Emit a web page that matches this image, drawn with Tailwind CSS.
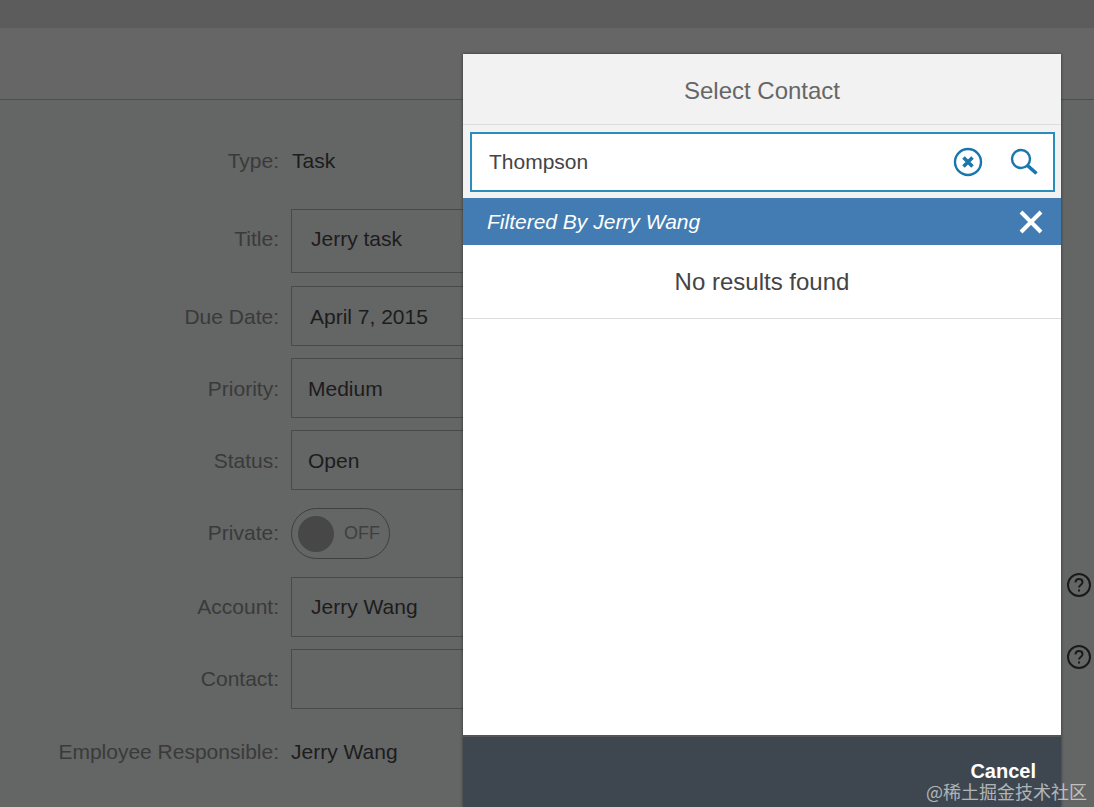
<!DOCTYPE html>
<html lang="en">
  <head>
    <meta charset="UTF-8" />
    <title>Select Contact</title>
    <script src="https://cdn.jsdelivr.net/npm/@tailwindcss/browser@4"></script>
  </head>
  <body class="relative w-[1094px] h-[807px] overflow-hidden bg-[#646565] font-['Liberation_Sans',Arial,sans-serif] text-[21px] text-[#1c1c1c]">
    <!-- Page behind the dialog -->
    <div class="h-[28px] bg-[#5c5c5c]"></div>
    <div class="h-[72px] bg-[#666666] border-b border-[#4e4e4e]"></div>

    <div class="flex flex-col">
      <div class="flex items-center h-10 mt-[41px]">
        <span class="w-[279px] text-right text-[#3a3a3a]">Type:</span>
        <span class="ml-3 pl-[1px]">Task</span>
      </div>
      <div class="flex items-center h-[64px] mt-[28px]">
        <span class="w-[279px] text-right text-[#3a3a3a] pb-[4px]">Title:</span>
        <div class="ml-3 w-[700px] h-full flex items-center pl-[19px] pb-[4px] border border-[#4a4a4a]">Jerry task</div>
      </div>
      <div class="flex items-center h-[60px] mt-[13px]">
        <span class="w-[279px] text-right text-[#3a3a3a] pt-[1px]">Due Date:</span>
        <div class="ml-3 w-[700px] h-full flex items-center pl-[18px] pt-[1px] border border-[#4a4a4a]">April 7, 2015</div>
      </div>
      <div class="flex items-center h-[60px] mt-[12px]">
        <span class="w-[279px] text-right text-[#3a3a3a] pt-[1px]">Priority:</span>
        <div class="ml-3 w-[700px] h-full flex items-center pl-[16px] pt-[1px] border border-[#4a4a4a]">Medium</div>
      </div>
      <div class="flex items-center h-[60px] mt-[12px]">
        <span class="w-[279px] text-right text-[#3a3a3a] pt-[1px]">Status:</span>
        <div class="ml-3 w-[700px] h-full flex items-center pl-[16px] pt-[1px] border border-[#4a4a4a]">Open</div>
      </div>
      <div class="flex items-center h-[51px] mt-[18px]">
        <span class="w-[279px] text-right text-[#3a3a3a] pb-[2px]">Private:</span>
        <div class="ml-3 w-[99px] h-full flex items-center pl-[6px] gap-[10px] rounded-full border border-[#3f3f3f] text-[18px] text-[#3f3f3f]">
          <span class="w-[36px] h-[36px] rounded-full bg-[#474747]"></span>
          <span>OFF</span>
        </div>
      </div>
      <div class="flex items-center h-[60px] mt-[18px]">
        <span class="w-[279px] text-right text-[#3a3a3a]">Account:</span>
        <div class="ml-3 w-[700px] h-full flex items-center pl-[19px] border border-[#4a4a4a]">Jerry Wang</div>
      </div>
      <div class="flex items-center h-[60px] mt-[12px]">
        <span class="w-[279px] text-right text-[#3a3a3a]">Contact:</span>
        <div class="ml-3 w-[700px] h-full border border-[#4a4a4a]"></div>
      </div>
      <div class="flex items-center h-10 mt-[23px]">
        <span class="w-[279px] text-right text-[#3a3a3a]">Employee Responsible:</span>
        <span class="ml-3">Jerry Wang</span>
      </div>
    </div>

    <!-- Help icons right of the dialog -->
    <svg class="absolute left-[1066px] top-[572px]" width="26" height="26" viewBox="0 0 26 26" fill="none" stroke="#1a1a1a" stroke-width="2">
      <circle cx="13" cy="13" r="11" />
      <path d="M9.5 10.5c0-2.2 1.6-3.5 3.5-3.5s3.5 1.3 3.5 3.2c0 2.7-3.5 2.8-3.5 5.3" />
      <path d="M13 17.5v2" />
    </svg>
    <svg class="absolute left-[1066px] top-[644px]" width="26" height="26" viewBox="0 0 26 26" fill="none" stroke="#1a1a1a" stroke-width="2">
      <circle cx="13" cy="13" r="11" />
      <path d="M9.5 10.5c0-2.2 1.6-3.5 3.5-3.5s3.5 1.3 3.5 3.2c0 2.7-3.5 2.8-3.5 5.3" />
      <path d="M13 17.5v2" />
    </svg>

    <!-- Dialog -->
    <div class="absolute left-[463px] top-[54px] w-[598px] h-[753px] flex flex-col bg-white shadow-[0_0_3px_rgba(0,0,0,0.5)]">
      <div class="h-[71px] flex items-center justify-center pt-[3px] bg-[#f2f2f2] border-b border-[#dddddd] text-[24px] text-[#666666]">Select Contact</div>
      <div class="h-[73px] pl-[7px] pr-[6px] pt-[7px] bg-[#f2f2f2]">
        <div class="h-[60px] flex items-center pl-[17px] pr-[14px] bg-white border-2 border-[#2a8dbd] text-[#444444]">
          <span class="flex-1">Thompson</span>
          <svg width="30" height="30" viewBox="0 0 30 30" fill="none" stroke="#1a76ad">
            <circle cx="15" cy="15" r="13" stroke-width="2.4" />
            <path d="M10.5 10.5l9 9M19.5 10.5l-9 9" stroke-width="3.6" />
          </svg>
          <svg class="ml-[26px]" width="30" height="30" viewBox="0 0 30 30" fill="none" stroke="#1a76ad">
            <circle cx="12" cy="12" r="9" stroke-width="2.4" />
            <path d="M18.5 18.5l9 8" stroke-width="3.6" />
          </svg>
        </div>
      </div>
      <div class="h-[47px] flex items-center justify-between pl-[24px] pr-[17px] bg-[#427cb3] italic text-white">
        <span class="pt-[1px]">Filtered By Jerry Wang</span>
        <svg width="26" height="26" viewBox="0 0 26 26" fill="none" stroke="white" stroke-width="4">
          <path d="M3 3l20 20M23 3L3 23" />
        </svg>
      </div>
      <div class="h-[74px] flex items-center justify-center border-b border-[#dddddd] text-[24px] text-[#444444]">No results found</div>
      <div class="flex-1"></div>
      <div class="h-[72px] flex items-start justify-end pt-[19px] pr-[25px] bg-[#3e4750] border-t-2 border-[#555555] font-bold text-[20px] text-white">Cancel</div>
    </div>

    <!-- Watermark -->
    <div class="absolute left-[926px] top-[778px] text-[18px] text-white/60 font-['Noto_Sans_CJK_SC',sans-serif]">@稀土掘金技术社区</div>
  </body>
</html>
